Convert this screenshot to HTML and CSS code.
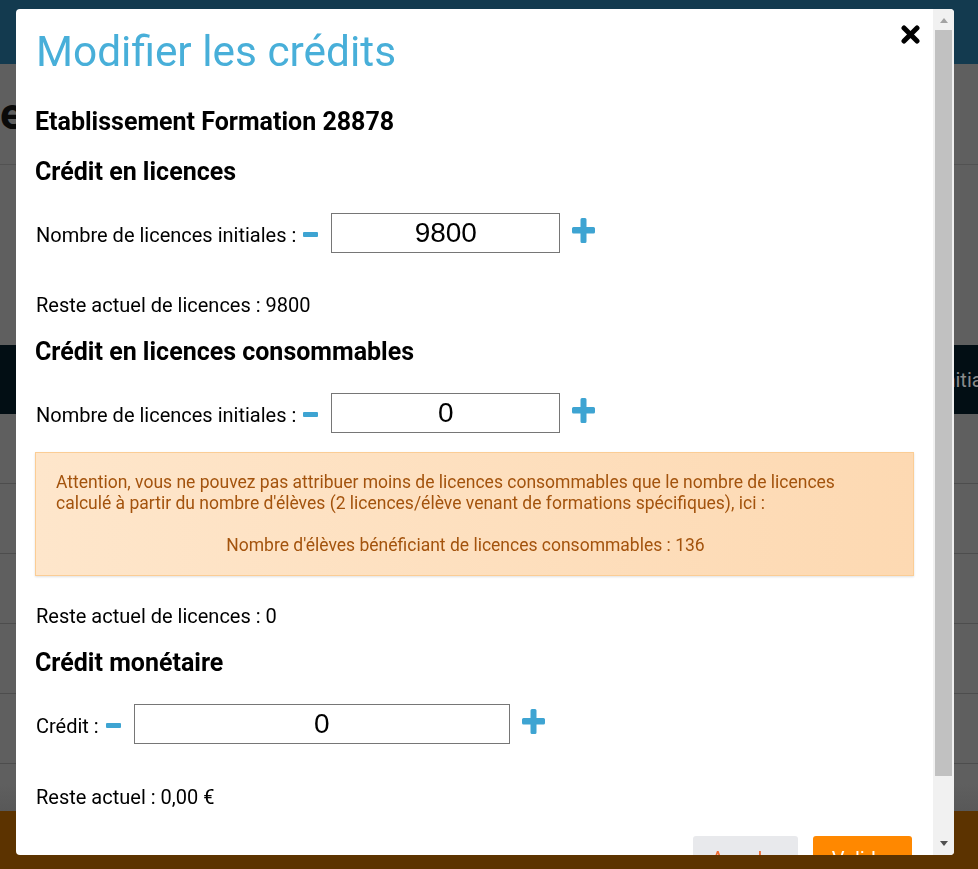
FILE: index.html
```html
<!DOCTYPE html>
<html lang="fr">
<head>
<meta charset="utf-8">
<title>Modifier les crédits</title>
<link rel="stylesheet" href="styles.css">
</head>
<body>
<div class="page">
  <header class="topbar"></header>
  <main class="main">
    <h1 class="page-title">e</h1>
    <div class="filters"></div>
    <div class="grid">
      <div class="grid-head"><span class="grid-th">Initiales</span></div>
      <div class="grid-row"></div>
      <div class="grid-row"></div>
      <div class="grid-row"></div>
      <div class="grid-row"></div>
      <div class="grid-row"></div>
    </div>
  </main>
  <footer class="footer"></footer>
</div>

<div class="modal" role="dialog" aria-labelledby="modal-title">
  <div class="modal-content">
    <div class="modal-header">
      <h2 class="modal-title" id="modal-title">Modifier les crédits</h2>
      <button class="modal-close" type="button" aria-label="Fermer">
        <svg width="19" height="19" viewBox="0 0 19 19"><path d="M3 3 L16 16 M16 3 L3 16" stroke="#000" stroke-width="5" stroke-linecap="round"/></svg>
      </button>
    </div>
    <div class="modal-body">
      <h3 class="school">Etablissement Formation 28878</h3>

      <h3 class="section-title">Crédit en licences</h3>
      <div class="qty-row">
        <label class="qty-label">Nombre de licences initiales :</label>
        <svg class="icon-minus" width="15" height="5" viewBox="0 0 15 5"><rect x="0" y="0" width="15" height="5" rx="1" fill="#3ea4d2"/></svg>
        <input class="qty-input" type="text" value="9800">
        <svg class="icon-plus" width="23" height="25" viewBox="0 0 23 25"><path d="M8.5 1.5 Q8.5 0 10 0 H13 Q14.5 0 14.5 1.5 V9 H21.5 Q23 9 23 10.5 V14 Q23 15.5 21.5 15.5 H14.5 V23.5 Q14.5 25 13 25 H10 Q8.5 25 8.5 23.5 V15.5 H1.5 Q0 15.5 0 14 V10.5 Q0 9 1.5 9 H8.5 Z" fill="#3ea4d2"/></svg>
      </div>
      <p class="rest">Reste actuel de licences : 9800</p>

      <h3 class="section-title">Crédit en licences consommables</h3>
      <div class="qty-row">
        <label class="qty-label">Nombre de licences initiales :</label>
        <svg class="icon-minus" width="15" height="5" viewBox="0 0 15 5"><rect x="0" y="0" width="15" height="5" rx="1" fill="#3ea4d2"/></svg>
        <input class="qty-input" type="text" value="0">
        <svg class="icon-plus" width="23" height="25" viewBox="0 0 23 25"><path d="M8.5 1.5 Q8.5 0 10 0 H13 Q14.5 0 14.5 1.5 V9 H21.5 Q23 9 23 10.5 V14 Q23 15.5 21.5 15.5 H14.5 V23.5 Q14.5 25 13 25 H10 Q8.5 25 8.5 23.5 V15.5 H1.5 Q0 15.5 0 14 V10.5 Q0 9 1.5 9 H8.5 Z" fill="#3ea4d2"/></svg>
      </div>
      <div class="alert">
        <p class="alert-text">Attention, vous ne pouvez pas attribuer moins de licences consommables que le nombre de licences calculé à partir du nombre d'élèves (2 licences/élève venant de formations spécifiques), ici :</p>
        <p class="alert-count">Nombre d'élèves bénéficiant de licences consommables : 136</p>
      </div>
      <p class="rest rest-after-alert">Reste actuel de licences : 0</p>

      <h3 class="section-title">Crédit monétaire</h3>
      <div class="qty-row">
        <label class="qty-label">Crédit :</label>
        <svg class="icon-minus" width="15" height="5" viewBox="0 0 15 5"><rect x="0" y="0" width="15" height="5" rx="1" fill="#3ea4d2"/></svg>
        <input class="qty-input qty-input-wide" type="text" value="0">
        <svg class="icon-plus" width="23" height="25" viewBox="0 0 23 25"><path d="M8.5 1.5 Q8.5 0 10 0 H13 Q14.5 0 14.5 1.5 V9 H21.5 Q23 9 23 10.5 V14 Q23 15.5 21.5 15.5 H14.5 V23.5 Q14.5 25 13 25 H10 Q8.5 25 8.5 23.5 V15.5 H1.5 Q0 15.5 0 14 V10.5 Q0 9 1.5 9 H8.5 Z" fill="#3ea4d2"/></svg>
      </div>
      <p class="rest rest-last">Reste actuel : 0,00 €</p>
    </div>
    <div class="modal-footer">
      <button class="btn btn-cancel" type="button">Annuler</button>
      <button class="btn btn-submit" type="button">Valider</button>
    </div>
  </div>
  <div class="scrollbar" aria-hidden="true">
    <div class="scroll-btn"><span class="arrow-up"></span></div>
    <div class="scroll-track"><div class="scroll-thumb"></div></div>
    <div class="scroll-btn scroll-btn-down"><span class="arrow-down"></span></div>
  </div>
</div>
</body>
</html>
```

FILE: styles.css
```css
* { box-sizing: border-box; }

html, body {
  margin: 0;
  height: 100%;
}

body {
  font-family: Roboto, "Liberation Sans", sans-serif;
  color: #000;
  overflow: hidden;
}

/* ---------- page behind the overlay (already dimmed) ---------- */
.page {
  display: flex;
  flex-direction: column;
  height: 869px;
  background: #5f5f5f;
}

.topbar {
  height: 64px;
  flex: none;
  background: #133a4f;
}

.main {
  flex: 1;
  display: flex;
  flex-direction: column;
  background: linear-gradient(to bottom, #5f5f5f 0, #5f5f5f 720px, #585858 747px);
}

.page-title {
  margin: 28px 0 0 0;
  font-size: 44px;
  line-height: 44px;
  font-weight: 700;
  color: #0a0a0a;
}

.filters {
  margin-top: 28px;
  height: 181px;
  border-top: 1px solid #525252;
}

.grid {
  display: flex;
  flex-direction: column;
}

.grid-head {
  height: 69px;
  background: #020e14;
  display: flex;
  align-items: center;
  padding-left: 939px;
  white-space: nowrap;
  overflow: hidden;
}

.grid-th {
  color: #8a8a8a;
  font-size: 20px;
}

.grid-row {
  height: 70px;
  border-bottom: 1px solid #4d4d4d;
}

.footer {
  height: 58px;
  flex: none;
  background: #5c3300;
}

/* ---------- modal ---------- */
.modal {
  position: fixed;
  left: 16px;
  top: 9px;
  width: 938px;
  height: 846px;
  display: flex;
  background: #fff;
  border-radius: 4px;
  overflow: hidden;
}

.modal-content {
  flex: 1;
  min-width: 0;
  padding: 17px 19px 0 19px;
}

.scrollbar {
  flex: none;
  width: 21px;
  display: flex;
  flex-direction: column;
  background: #f1f1f1;
}

.scroll-btn {
  height: 21px;
  flex: none;
  display: flex;
  justify-content: center;
  padding-top: 9px;
}

.scroll-btn-down {
  padding-top: 7px;
}

.arrow-up {
  width: 0;
  height: 0;
  border-left: 4.5px solid transparent;
  border-right: 4.5px solid transparent;
  border-bottom: 5px solid #a3a3a3;
}

.arrow-down {
  width: 0;
  height: 0;
  border-left: 4.5px solid transparent;
  border-right: 4.5px solid transparent;
  border-top: 5px solid #505050;
}

.scroll-track {
  flex: 1;
  padding: 0 2px;
}

.scroll-thumb {
  height: 746px;
  background: #c1c1c1;
}

.modal-header {
  display: flex;
  justify-content: space-between;
  align-items: flex-start;
}

.modal-title {
  margin: 0;
  padding-left: 1px;
  font-size: 42.4px;
  line-height: 52px;
  font-weight: 400;
  color: #48afd9;
}

.modal-close {
  border: 0;
  padding: 0;
  margin: -1px -6px 0 0;
  background: none;
  width: 19px;
  height: 19px;
  display: flex;
}

.modal-body {
  font-size: 20px;
}

.school,
.section-title {
  margin: 0;
  font-size: 25px;
  line-height: 28px;
  font-weight: 700;
}

.school {
  margin-top: 30px;
}

.section-title {
  margin-top: 22px;
}

.qty-row {
  display: flex;
  align-items: baseline;
  margin-top: 27px;
}

.qty-label {
  padding-left: 1px;
  font-size: 20px;
  line-height: 21px;
}

.icon-minus {
  flex: none;
  align-self: flex-start;
  margin-top: 19px;
  margin-left: 7px;
}

.qty-input {
  flex: none;
  width: 229px;
  height: 40px;
  margin-left: 13px;
  padding: 0;
  border: 1px solid #767676;
  border-radius: 0;
  font-family: "Liberation Sans", Arial, sans-serif;
  font-size: 28px;
  text-align: center;
  color: #000;
  background: #fff;
}

.qty-input-wide {
  width: 376px;
}

.icon-plus {
  flex: none;
  align-self: flex-start;
  margin-top: 5px;
  margin-left: 12px;
}

.rest {
  margin: 42px 0 0 0;
  padding-left: 1px;
  font-size: 20px;
  line-height: 21px;
}

.rest-after-alert {
  margin-top: 30px;
}

.rest-last {
  margin-top: 43px;
}

.alert {
  margin-top: 19px;
  padding: 19px 20px;
  border: 1px solid #fbcd95;
  background: linear-gradient(to right, #fee6cb, #fdd9b2);
  box-shadow: 0 1px 2px rgba(0, 0, 0, 0.12);
  color: #a3530d;
  font-size: 17.5px;
  line-height: 21px;
}

.alert-text {
  margin: 0;
}

.alert-count {
  margin: 21px 0 0 0;
  padding-right: 18px;
  text-align: center;
}

.modal-footer {
  display: flex;
  justify-content: flex-end;
  gap: 15px;
  padding: 28px 2px 41px 0;
}

.btn {
  height: 46px;
  padding: 0;
  border: 0;
  border-radius: 3px;
  font-family: Roboto, sans-serif;
  font-size: 20px;
}

.btn-cancel {
  width: 105px;
  background: #e8e9ec;
  color: #f06a2e;
}

.btn-submit {
  width: 99px;
  background: #ff8800;
  color: #fff;
}
```
